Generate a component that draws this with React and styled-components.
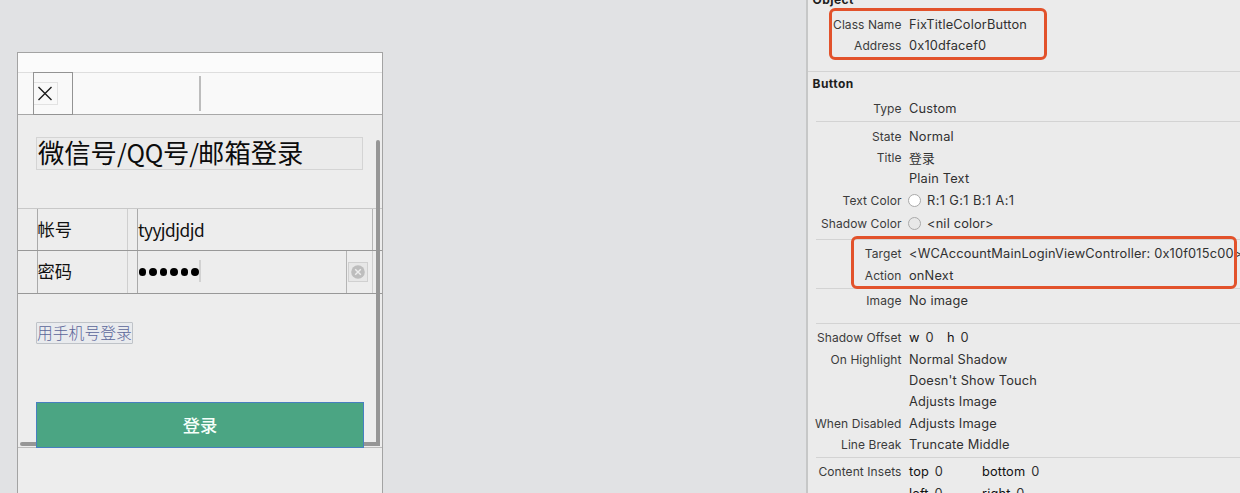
import React from 'react';
import styled, { createGlobalStyle } from 'styled-components';

const GlobalStyle = createGlobalStyle`
  body {
    margin: 0;
    overflow: hidden;
  }
  * {
    box-sizing: border-box;
  }
`;

const Page = styled.div`
  display: flex;
  width: 1240px;
  height: 493px;
  overflow: hidden;
  background: #e1e2e4;
  font-family: Inter, 'Noto Sans CJK SC', sans-serif;
`;

const Canvas = styled.div`
  width: 806px;
  padding: 52px 0 0 17px;
`;

/* Phone preview */

const Phone = styled.div`
  position: relative;
  width: 366px;
  height: 460px;
  border: 1px solid #a3a3a3;
  background: #ededed;
  font-family: 'Noto Sans CJK SC', sans-serif;
`;

const StatusBar = styled.div`
  height: 20px;
  border-bottom: 1px solid #dedede;
  background: #fbfbfb;
`;

const NavBar = styled.div`
  display: flex;
  height: 42px;
  padding-left: 15px;
  border-bottom: 1px solid #a8a8a8;
  background: #f9f9f9;
`;

const CloseBox = styled.div`
  width: 40px;
  height: 43px;
  margin-top: -1px;
  padding-top: 9px;
  border: 1px solid #939393;
`;

const CloseIcon = styled.div`
  display: flex;
  align-items: center;
  width: 24px;
  height: 23px;
  padding-left: 3px;
  border: 1px solid #e2e2e2;
  border-left: none;
`;

const NavTitle = styled.div`
  width: 2px;
  height: 35px;
  margin: 3px 0 0 126px;
  background: #bdbdbd;
`;

const Heading = styled.div`
  width: 327px;
  height: 33px;
  margin: 22px 0 38px 18px;
  padding-left: 1px;
  border: 1px solid #d4d4d4;
  background: #ebebeb;
  color: #0c0c0c;
  font-size: 26.3px;
  line-height: 28px;
  white-space: nowrap;
`;

const Latin = styled.span`
  font-size: ${(props) => props.$size || 'inherit'};
  letter-spacing: ${(props) => props.$spacing}px;
`;

const FieldRow = styled.div`
  display: flex;
  height: ${(props) => (props.$first ? 42 : 43)}px;
  padding-left: 19px;
  border-top: 1px solid ${(props) => (props.$first ? '#c8c8c8' : '#989898')};
`;

const FieldLabel = styled.div`
  width: 91px;
  border-left: 1px solid #aaa;
  border-right: 1px solid #cfcfcf;
  color: #111;
  font-size: 17.3px;
  line-height: 40px;
  text-indent: -0.6px;
`;

const FieldValue = styled.div`
  display: flex;
  align-items: center;
  width: ${(props) => props.$width}px;
  margin-left: 9px;
  border-left: 1px solid #aaa;
  border-right: 1px solid #b5b5b5;
  color: #111;
  font-size: 17.3px;
  line-height: 39px;
`;

const Dots = styled.div`
  display: flex;
  gap: 2.7px;
  padding-left: 0.6px;
`;

const Dot = styled.span`
  width: 7.8px;
  height: 7.8px;
  border-radius: 50%;
  background: #000;
`;

const Caret = styled.span`
  width: 2px;
  height: 22px;
  margin-top: -2px;
  background: #d2d2d2;
`;

const ClearBox = styled.div`
  display: flex;
  align-items: center;
  justify-content: center;
  width: 26px;
  padding-right: 3px;
  border-right: 1px solid #cfcfcf;
`;

const ClearButton = styled.div`
  display: flex;
  align-items: center;
  justify-content: center;
  width: 20px;
  height: 20px;
  border: 1px solid #d0d0d0;
  background: #e7e7e7;
`;

const FieldsEnd = styled.div`
  height: 1px;
  background: #989898;
`;

const PhoneLink = styled.div`
  width: 97px;
  height: 22px;
  margin: 28px 0 58px 18px;
  border: 1px solid #bfc3c8;
  border-radius: 1px;
  background: #e9ebee;
  color: #5b6699;
  font-size: 15.8px;
  font-weight: 300;
  line-height: 20px;
  white-space: nowrap;
`;

const LoginButton = styled.div`
  position: relative;
  z-index: 1;
  width: 328px;
  height: 46px;
  margin-left: 18px;
  border: 1px solid #477fc0;
  background: #4ba583;
  color: #f5fffa;
  font-size: 17.3px;
  font-weight: 500;
  line-height: 43px;
  text-align: center;
`;

const ScrollEnd = styled.div`
  height: 1px;
  margin-top: -1px;
  background: #bcbcbc;
`;

const VerticalScroll = styled.div`
  position: absolute;
  top: 87px;
  left: 358px;
  width: 4px;
  height: 306px;
  border-radius: 2px 2px 0 0;
  background: #969696;
`;

const HorizontalScroll = styled.div`
  position: absolute;
  top: 389px;
  left: 2px;
  width: 360px;
  height: 4px;
  border-radius: 2px;
  background: #969696;
`;

/* Inspector */

const Inspector = styled.div`
  width: 434px;
  height: 493px;
  overflow: hidden;
  border-left: 2px solid #c6c7c7;
  background: #ebebeb;
  color: #303030;
`;

const Section = styled.div`
  position: relative;
  height: ${(props) => props.$height}px;
  margin-left: ${(props) => (props.$full ? 0 : 8)}px;
  padding-top: ${(props) => props.$top || 0}px;
  border-bottom: 1px solid #d3d3d3;
`;

const SectionTitle = styled.div`
  height: ${(props) => (props.$clipped ? 13.6 : 24)}px;
  margin-left: 4.5px;
  color: #1e1e1e;
  font-size: 12px;
  font-weight: 700;
  letter-spacing: 0.45px;
  line-height: ${(props) => (props.$clipped ? 0 : 24)}px;
`;

const PropertyRow = styled.div`
  display: flex;
  align-items: center;
  height: ${(props) => props.$height || 21.4}px;
  margin-left: ${(props) => (props.$full ? 0 : -8)}px;
  white-space: nowrap;
`;

const PropertyLabel = styled.div`
  display: flex;
  flex-shrink: 0;
  justify-content: flex-end;
  width: 93.5px;
  margin-right: 7.5px;
  color: #3b3b3b;
  font-size: 12px;
  letter-spacing: 0.07px;
`;

const PropertyValue = styled.div`
  display: flex;
  align-items: center;
  font-size: 12.8px;
  letter-spacing: 0.17px;
`;

const Swatch = styled.span`
  width: 13px;
  height: 13px;
  margin: 0 6px 0 -1px;
  border: 1px solid #a9a9a9;
  border-radius: 50%;
  background: ${(props) => props.$color};
`;

const Metric = styled.span`
  width: ${(props) => props.$width}px;
  color: #111;

  span {
    margin-left: 2px;
    color: #303030;
  }
`;

const Highlight = styled.div`
  position: absolute;
  top: ${(props) => props.$top}px;
  left: ${(props) => props.$left}px;
  width: ${(props) => props.$width}px;
  height: ${(props) => props.$height}px;
  border: 3px solid #e2522b;
  border-radius: 6px;
`;

const Property = ({ label, children, height, full }) => (
  <PropertyRow $height={height} $full={full}>
    <PropertyLabel>{label}</PropertyLabel>
    <PropertyValue>{children}</PropertyValue>
  </PropertyRow>
);

const PhonePreview = () => (
  <Phone>
    <StatusBar />
    <NavBar>
      <CloseBox>
        <CloseIcon>
          <svg width="16" height="16" viewBox="0 0 16 16">
            <path d="M1.5 1L14.5 14M14.5 1L1.5 14" stroke="#1c1c1c" strokeWidth="1.4" fill="none" />
          </svg>
        </CloseIcon>
      </CloseBox>
      <NavTitle />
    </NavBar>
    <Heading>
      微信号<Latin $spacing={-0.3} $size="25px">/QQ</Latin>号<Latin $spacing={-0.9} $size="25px">/</Latin>邮箱登录
    </Heading>
    <FieldRow $first>
      <FieldLabel>帐号</FieldLabel>
      <FieldValue $width={236}>
        <Latin $spacing={-0.5}>tyyjdjdjd</Latin>
      </FieldValue>
    </FieldRow>
    <FieldRow>
      <FieldLabel>密码</FieldLabel>
      <FieldValue $width={210}>
        <Dots>
          {[0, 1, 2, 3, 4, 5].map((dot) => (
            <Dot key={dot} />
          ))}
        </Dots>
        <Caret />
      </FieldValue>
      <ClearBox>
        <ClearButton>
          <svg width="14" height="14" viewBox="0 0 14 14">
            <circle cx="7" cy="7" r="6.8" fill="#bdbdbd" />
            <path d="M4.2 4.2L9.8 9.8M9.8 4.2L4.2 9.8" stroke="#ededed" strokeWidth="1.4" />
          </svg>
        </ClearButton>
      </ClearBox>
    </FieldRow>
    <FieldsEnd />
    <PhoneLink>用手机号登录</PhoneLink>
    <LoginButton>登录</LoginButton>
    <ScrollEnd />
    <VerticalScroll />
    <HorizontalScroll />
  </Phone>
);

const ObjectInspector = () => (
  <Inspector>
    <Section $full $height={72}>
      <SectionTitle $clipped>Object</SectionTitle>
      <Property label="Class Name" full>FixTitleColorButton</Property>
      <Property label="Address" full>0x10dfacef0</Property>
      <Highlight $top={8} $left={21} $width={218} $height={52} />
    </Section>
    <SectionTitle>Button</SectionTitle>
    <Section $height={26} $top={2}>
      <Property label="Type">Custom</Property>
    </Section>
    <Section $height={118} $top={3.4}>
      <Property label="State">Normal</Property>
      <Property label="Title">登录</Property>
      <Property>Plain Text</Property>
      <Property label="Text Color">
        <Swatch $color="#fff" />
        <Latin $spacing={0.4}>R:1 G:1 B:1 A:1</Latin>
      </Property>
      <Property label="Shadow Color" height={26}>
        <Swatch $color="#e8e8e8" />
        &lt;nil color&gt;
      </Property>
    </Section>
    <Section $height={49} $top={3}>
      <Property label="Target">&lt;WCAccountMainLoginViewController: 0x10f015c00&gt;</Property>
      <Property label="Action">onNext</Property>
      <Highlight $top={-4} $left={34.5} $width={386} $height={53} />
    </Section>
    <Section $height={35} $top={0.5}>
      <Property label="Image">No image</Property>
    </Section>
    <Section $height={134} $top={3}>
      <Property label="Shadow Offset">
        <Metric $width={38}>w <span>0</span></Metric>
        <Metric $width={38}>h <span>0</span></Metric>
      </Property>
      <Property label="On Highlight">Normal Shadow</Property>
      <Property>Doesn't Show Touch</Property>
      <Property>Adjusts Image</Property>
      <Property label="When Disabled">Adjusts Image</Property>
      <Property label="Line Break">Truncate Middle</Property>
    </Section>
    <Section $height={60} $top={3}>
      <Property label="Content Insets">
        <Metric $width={73}>top <span>0</span></Metric>
        <Metric $width={73}>bottom <span>0</span></Metric>
      </Property>
      <Property>
        <Metric $width={73}>left <span>0</span></Metric>
        <Metric $width={73}>right <span>0</span></Metric>
      </Property>
    </Section>
  </Inspector>
);

export default function App() {
  return (
    <Page>
      <GlobalStyle />
      <Canvas>
        <PhonePreview />
      </Canvas>
      <ObjectInspector />
    </Page>
  );
}
